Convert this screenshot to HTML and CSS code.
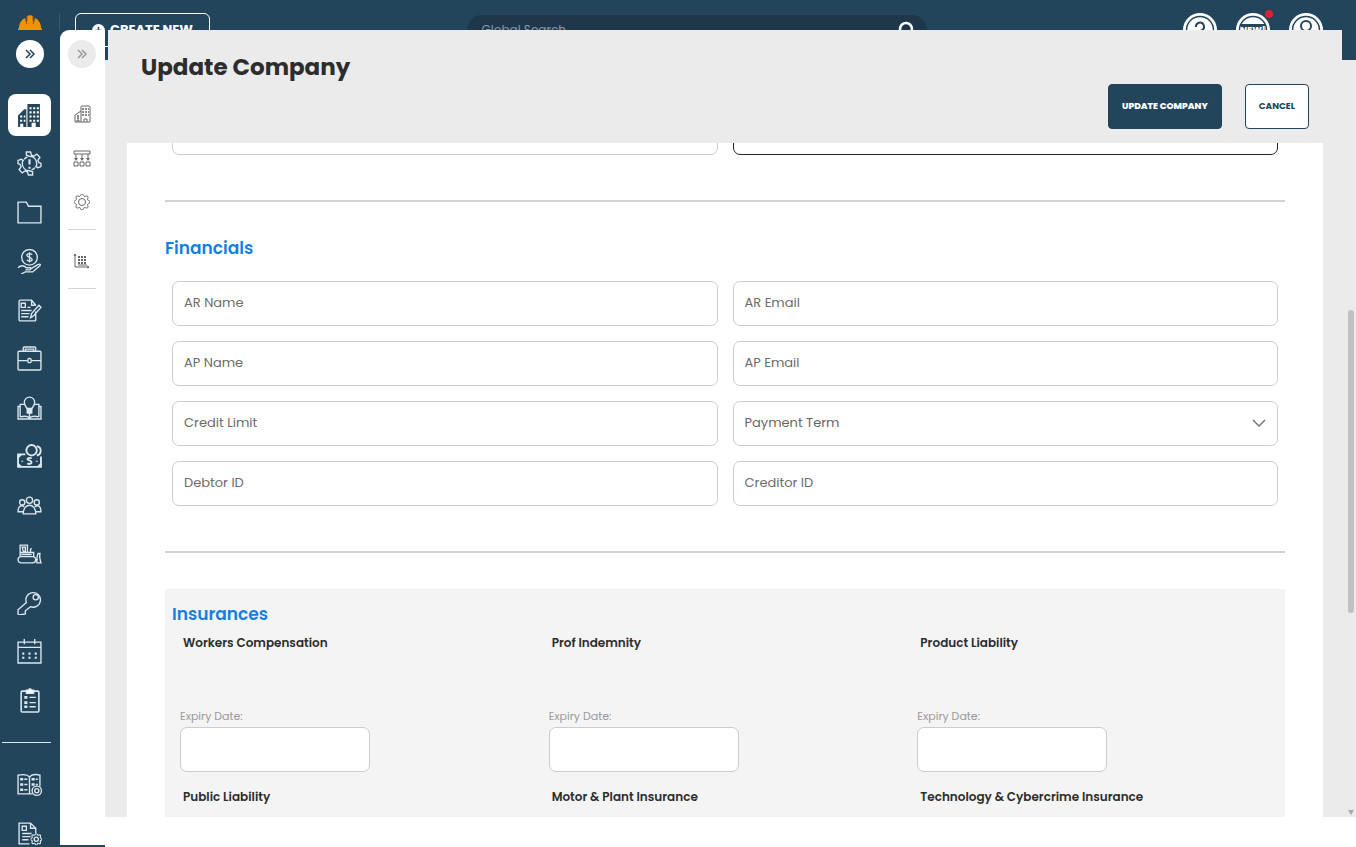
FILE: index.html
```html
<!DOCTYPE html>
<html lang="en">
<head>
    <meta charset="UTF-8">
    <meta name="viewport" content="width=device-width, initial-scale=1.0">
    <title>Update Company</title>
    <link rel="stylesheet" href="styles.css">
</head>
<body>
    <svg class="defs" aria-hidden="true">
        <symbol id="gear" viewBox="0 0 16 16">
            <path d="M9.405 1.05c-.413-1.4-2.397-1.4-2.81 0l-.1.34a1.464 1.464 0 0 1-2.105.872l-.31-.17c-1.283-.698-2.686.705-1.987 1.987l.169.311c.446.82.023 1.841-.872 2.105l-.34.1c-1.4.413-1.4 2.397 0 2.81l.34.1a1.464 1.464 0 0 1 .872 2.105l-.17.31c-.698 1.283.705 2.686 1.987 1.987l.311-.169a1.464 1.464 0 0 1 2.105.872l.1.34c.413 1.4 2.397 1.4 2.81 0l.1-.34a1.464 1.464 0 0 1 2.105-.872l.31.17c1.283.698 2.686-.705 1.987-1.987l-.169-.311a1.464 1.464 0 0 1 .872-2.105l.34-.1c1.4-.413 1.4-2.397 0-2.81l-.34-.1a1.464 1.464 0 0 1-.872-2.105l.17-.31c.698-1.283-.705-2.686-1.987-1.987l-.311.169a1.464 1.464 0 0 1-2.105-.872l-.1-.34z"/>
        </symbol>
    </svg>

    <header class="topbar">
        <a href="#" class="logo" aria-label="Home">
            <svg width="24" height="16" viewBox="0 0 24 16">
                <path fill="#f39200" d="M0 15v-1l1-1c0-4 2-8 6-10l2 6V1c2-1 4-1 6 0v8l2-6c4 2 6 6 6 10l1 1v1z"/>
                <path stroke="#8a5a1c" fill="none" d="M7 3l2 6M17 3l-2 6M9 1v5M15 1v5"/>
            </svg>
        </a>
        <button class="create-new">
            <svg width="13" height="13" viewBox="0 0 13 13">
                <circle cx="6.5" cy="6.5" r="6.5" fill="#fff"/>
                <path d="M6.500 3v7M3 6.500h7" stroke="#23455b" stroke-width="1.500"/>
            </svg>
            CREATE NEW
        </button>
        <form class="search">
            <input type="search" placeholder="Global Search" aria-label="Global Search">
            <button type="button" aria-label="Search">
                <svg width="18" height="18" viewBox="0 0 18 18" fill="none" stroke="#fff" stroke-width="2.500">
                    <circle cx="9" cy="8" r="6"/><path d="M13 12l4 5"/>
                </svg>
            </button>
        </form>
        <nav class="top-actions">
            <button aria-label="Help">
                <svg width="34" height="34" viewBox="0 0 34 34" fill="none" stroke="#23455b" stroke-width="2">
                    <circle cx="17" cy="17" r="17" fill="#fff" stroke="none"/><circle cx="17" cy="17" r="13.500" stroke-width="1.500"/>
                    <path d="M13 14a4 4 0 1 1 6 3c-2 1-2 2-2 4M17 23v2"/>
                </svg>
            </button>
            <button aria-label="What's new">
                <svg width="34" height="34" viewBox="0 0 34 34">
                    <circle cx="17" cy="17" r="17" fill="#fff"/><circle cx="17" cy="17" r="13.500" fill="none" stroke="#23455b" stroke-width="1.500"/>
                    <rect x="5" y="11" width="24" height="12" fill="#23455b"/>
                    <text x="17" y="20" class="new-text">NEW!</text>
                </svg>
                <span class="dot"></span>
            </button>
            <button aria-label="Account">
                <svg width="34" height="34" viewBox="0 0 34 34" fill="none" stroke="#23455b" stroke-width="2">
                    <circle cx="17" cy="17" r="17" fill="#fff" stroke="none"/><circle cx="17" cy="17" r="13.500" stroke-width="1.500"/>
                    <circle cx="17" cy="13" r="5"/><path d="M8 27c1-9 17-9 18 0"/>
                </svg>
            </button>
        </nav>
    </header>

    <div class="workspace">
        <div class="rails">
            <nav class="sidebar" aria-label="Main">
                <button class="toggle" aria-label="Expand menu">
                    <svg width="12" height="10" viewBox="0 0 12 10"><path d="M2 1l4 4-4 4M6 1l4 4-4 4"/></svg>
                </button>
                <div class="nav-list">
                    <a href="#" class="nav-item active" aria-label="Company">
                        <svg viewBox="0 0 24 24">
                            <path fill="#23455b" stroke="none" d="M10 1h12v22H10zM1 23V12l6-6h2v17z"/>
                            <path stroke="#fff" stroke-width="2" stroke-dasharray="2 1.500" d="M12 5h9M12 9h9M12 13h9M12 17h9M3 13h5M3 17h5"/>
                            <path fill="#fff" stroke="none" d="M14 19h4v4h-4zM3 20h3v3H3z"/>
                        </svg>
                    </a>
                    <a href="#" class="nav-item" aria-label="Incidents">
                        <svg viewBox="0 0 24 24">
                            <path d="M9 4V1h4l1 3 2 1 3-2 3 3-2 3 1 2 2 1v3l-3 1-2-1 1-2c0-5-3-8-7-8zM15 20v3h-4l-1-3-2-1-3 2-3-3 2-3-1-2-2-1V9l3-1 2 1-1 2c0 5 3 8 7 8z"/>
                            <path d="M7 8c1-2 2-2 3-2M17 16c-1 2-2 2-3 2"/>
                            <path stroke-width="2" d="M12 8v5M12 15v2"/>
                        </svg>
                    </a>
                    <a href="#" class="nav-item" aria-label="Files">
                        <svg viewBox="0 0 24 24"><path d="M1 22V2h8l2 4h12v16z"/></svg>
                    </a>
                    <a href="#" class="nav-item" aria-label="Finance">
                        <svg viewBox="0 0 24 24">
                            <circle cx="12" cy="8" r="7.500"/><path d="M14.500 5.500c-1-1.500-5-1.500-5 .5s5 2 5 4-4 2-5 .5M12 3v10M1 18c3-3 6-2 8 0h4c1 1 0 2-1 2H8M13 19l7-4c2-1 3 0 2 1l-7 6H8l-4 2"/>
                        </svg>
                    </a>
                    <a href="#" class="nav-item" aria-label="Forms">
                        <svg viewBox="0 0 24 24">
                            <path d="M18 13v8q0 1-1 1H3q-1 0-1-1V3q0-1 1-1h11l4 5M14 2v5h4M4 5h4v4H4zM10 9h3M4 12h10M4 15h8M4 18h7M13 19l1-4 7-8 2 2-7 8z"/>
                        </svg>
                    </a>
                    <a href="#" class="nav-item" aria-label="Projects">
                        <svg viewBox="0 0 24 24">
                            <rect x="1" y="5" width="22" height="18" rx="1"/><path d="M6 5V2q0-1 1-1h10q1 0 1 1v3M8 5V3h8v2M1 14h9M14 14h9"/><rect x="10.500" y="12" width="3" height="4" rx="1"/>
                        </svg>
                    </a>
                    <a href="#" class="nav-item" aria-label="Knowledge">
                        <svg viewBox="0 0 24 24">
                            <path d="M10 14c0-2-3-3-3-7a5 5 0 0 1 10 0c0 4-3 5-3 7zM10 14v3h4v-3M12 17v6M7 9H3v12M17 9h4v12M3 11H1v12h22V11h-2M3 21c4-1 7-1 9 1 2-2 5-2 9-1"/>
                            <path fill="#dce8ef" d="M10 13h4v4h-4z"/>
                        </svg>
                    </a>
                    <a href="#" class="nav-item bold" aria-label="Payments">
                        <svg viewBox="0 0 24 24">
                            <path d="M8 10H1v12h22V12M19 2c5 1 5 8 0 9"/><circle cx="14" cy="6" r="5"/>
                            <path d="M14 14c-1-1-4-1-4 .5s4 1 4 3-3 2-4 1M5 16v1M19 16v1"/><path d="M1 13l3-3M1 19l3 3M23 19l-3 3"/>
                        </svg>
                    </a>
                    <a href="#" class="nav-item" aria-label="Teams">
                        <svg viewBox="0 0 24 24">
                            <circle cx="12" cy="7" r="3"/><circle cx="5" cy="9" r="2.500"/><circle cx="19" cy="9" r="2.500"/>
                            <path d="M6 20c0-11 12-11 12 0zM6 18H1c0-5 2-7 6-5M18 18h5c0-5-2-7-6-5"/>
                        </svg>
                    </a>
                    <a href="#" class="nav-item" aria-label="Plant">
                        <svg viewBox="0 0 24 24">
                            <rect x="1" y="15" width="17" height="6" rx="3"/><path d="M3 15V4h7v7h6v4M3 11h7M5 6h3v4H6zM13 11V8l1-1M18 18h2M20 12h2c-1 4 0 6 1 9h-4c0-3 0-6 1-9M4 13h10"/>
                        </svg>
                    </a>
                    <a href="#" class="nav-item" aria-label="Access">
                        <svg viewBox="0 0 24 24">
                            <path d="M9 12a7 7 0 1 1 4 4l-5 4v3l-6 1-1-1v-4z"/><circle cx="18" cy="7" r="2.500"/>
                        </svg>
                    </a>
                    <a href="#" class="nav-item" aria-label="Calendar">
                        <svg viewBox="0 0 24 24">
                            <path d="M1 3h22v20H1zM1 8h22M7 0v5M17 0v5"/><path stroke-width="2" stroke-dasharray="2 4" d="M5 14h15M5 18h15"/>
                        </svg>
                    </a>
                    <a href="#" class="nav-item" aria-label="Checklist">
                        <svg viewBox="0 0 24 24">
                            <rect x="4" y="3" width="17" height="20" rx="1" stroke-width="1.500"/><path fill="#fff" d="M9 2h2l1-1h1l1 1h2v3H9z"/>
                            <path stroke-width="2.500" d="M7 9h3M7 14h3M7 18h3"/><path d="M12 9h6M12 14h6M12 18h6"/>
                        </svg>
                    </a>
                </div>
                <div class="nav-footer">
                    <a href="#" class="nav-item" aria-label="Catalogue settings">
                        <svg viewBox="0 0 24 24">
                            <path d="M15 21H1V3c5-1 9-1 11 2 2-3 6-3 10-2v11M12 5v16"/><path stroke-width="2.500" d="M3 7h3M3 12h3M3 17h3M14 7h3M14 12h3"/><path d="M7 7h3M7 12h3M7 17h3M18 7h2M18 12h2"/>
                            <circle cx="19" cy="18" r="4.500" fill="#23455b"/><circle cx="19" cy="18" r="2"/>
                        </svg>
                    </a>
                    <a href="#" class="nav-item" aria-label="Form settings">
                        <svg viewBox="0 0 24 24">
                            <path d="M12 22H2V2h11l5 5v5M13 2v5h5M5 5h4v4H5zM5 12h9M5 15h8M5 18h6"/>
                            <use href="#gear" x="13" y="12" width="11" height="11" fill="#23455b" stroke-width="1.500"/><circle cx="18.500" cy="17.500" r="2"/>
                        </svg>
                    </a>
                </div>
            </nav>

            <nav class="subnav" aria-label="Company">
                <button class="toggle muted" aria-label="Expand submenu">
                    <svg width="12" height="10" viewBox="0 0 12 10"><path d="M2 1l4 4-4 4M6 1l4 4-4 4"/></svg>
                </button>
                <div class="subnav-group">
                    <a href="#" class="sub-item" aria-label="Companies">
                        <svg viewBox="0 0 18 18"><path d="M8 17V2q0-1 1-1h7q1 0 1 1v15zM8 6L2 10v7h6M11 17v-3h3v3M4 17v-2h2v2"/><path stroke-width="1.500" stroke-dasharray="2 1" d="M9 4h7M9 7h7M9 10h7M4 11h3M4 13h3"/></svg>
                    </a>
                    <a href="#" class="sub-item" aria-label="Structure">
                        <svg viewBox="0 0 18 18"><path d="M1 2h16v3H1zM3 5v5M9 5v5M15 5v5M1 13h4v4H1zM7 13h4v4H7zM13 13h4v4h-4z"/><path fill="#666" stroke="none" d="M1 9h4l-2 3zM7 9h4l-2 3zM13 9h4l-2 3z"/></svg>
                    </a>
                    <a href="#" class="sub-item" aria-label="Settings">
                        <svg viewBox="0 0 18 18"><use href="#gear" x="1" y="1" width="16" height="16"/><circle cx="9" cy="9" r="3.500"/></svg>
                    </a>
                </div>
                <div class="subnav-group">
                    <a href="#" class="sub-item" aria-label="Reports">
                        <svg viewBox="0 0 18 18"><path d="M2 2v13h14M1 4l1-2 1 2M14 14l2 1-2 1"/><path stroke-width="2" stroke-dasharray="2 1" d="M5 5h9M5 8h9M5 11h9"/><path d="M5 13h9"/></svg>
                    </a>
                </div>
            </nav>
        </div>

        <main class="modal">
            <div class="modal-header">
                <h1>Update Company</h1>
                <div class="modal-actions">
                    <button type="submit" form="company-form" class="btn btn-primary">UPDATE COMPANY</button>
                    <button type="button" class="btn">CANCEL</button>
                </div>
            </div>
            <form id="company-form" class="panel">
                <div class="fields scrolled">
                    <input type="text" class="field" aria-label="Address">
                    <input type="text" class="field focused" aria-label="Postcode">
                </div>
                <hr>
                <section class="financials">
                    <h2>Financials</h2>
                    <div class="fields">
                        <input type="text" class="field" placeholder="AR Name" aria-label="AR Name">
                        <input type="text" class="field" placeholder="AR Email" aria-label="AR Email">
                        <input type="text" class="field" placeholder="AP Name" aria-label="AP Name">
                        <input type="text" class="field" placeholder="AP Email" aria-label="AP Email">
                        <input type="text" class="field" placeholder="Credit Limit" aria-label="Credit Limit">
                        <div class="select-wrap">
                            <select class="field" aria-label="Payment Term">
                                <option>Payment Term</option>
                            </select>
                            <svg width="14" height="8" viewBox="0 0 14 8"><path d="M1 1l6 6 6-6"/></svg>
                        </div>
                        <input type="text" class="field" placeholder="Debtor ID" aria-label="Debtor ID">
                        <input type="text" class="field" placeholder="Creditor ID" aria-label="Creditor ID">
                    </div>
                </section>
                <hr>
                <section class="insurances">
                    <h2>Insurances</h2>
                    <div class="insurance-grid">
                        <div class="insurance">
                            <h3>Workers Compensation</h3>
                            <label for="exp-workers">Expiry Date:</label>
                            <input type="text" class="field" id="exp-workers">
                        </div>
                        <div class="insurance">
                            <h3>Prof Indemnity</h3>
                            <label for="exp-indemnity">Expiry Date:</label>
                            <input type="text" class="field" id="exp-indemnity">
                        </div>
                        <div class="insurance">
                            <h3>Product Liability</h3>
                            <label for="exp-product">Expiry Date:</label>
                            <input type="text" class="field" id="exp-product">
                        </div>
                        <div class="insurance">
                            <h3>Public Liability</h3>
                        </div>
                        <div class="insurance">
                            <h3>Motor &amp; Plant Insurance</h3>
                        </div>
                        <div class="insurance">
                            <h3>Technology &amp; Cybercrime Insurance</h3>
                        </div>
                    </div>
                </section>
            </form>
            <div class="scrollbar">
                <span class="thumb"></span>
                <span class="arrow"></span>
            </div>
        </main>
    </div>
</body>
</html>
```

FILE: styles.css
```css
* {
    box-sizing: border-box;
}
body {
    margin: 0;
    height: 100vh;
    overflow: hidden;
    background: #fff;
    color: #2d2d2d;
    font-family: Poppins, Inter, "Open Sans", sans-serif;
    font-size: 13px;
}
button, input, select {
    font-family: inherit;
}
button {
    cursor: pointer;
}
h1, h2, h3 {
    margin: 0;
}
svg {
    display: block;
}
.defs {
    position: absolute;
    width: 0;
    height: 0;
}

/* top bar */
.topbar {
    display: flex;
    align-items: flex-start;
    height: 60px;
    padding: 13px 33px 0 0;
    background: #23455b;
}
.logo {
    display: flex;
    justify-content: center;
    width: 60px;
    height: 34px;
    padding-top: 2px;
    border-right: 1px solid #3d5b6e;
}
.create-new {
    display: flex;
    align-items: center;
    justify-content: center;
    gap: 5px;
    width: 135px;
    height: 34px;
    margin-left: 15px;
    padding: 0;
    border: 1px solid #fff;
    border-radius: 6px;
    background: none;
    color: #fff;
    font-size: 13px;
    font-weight: 700;
}
.search {
    display: flex;
    align-items: center;
    width: 460px;
    height: 30px;
    margin: 2px auto 0;
    padding: 0 12px 0 15px;
    border-radius: 15px;
    background: #1e374a;
}
.search input {
    flex: 1;
    padding: 0;
    border: 0;
    outline: 0;
    background: none;
    color: #fff;
    font-size: 12px;
}
.search input::placeholder {
    color: #8d9aa5;
}
.search button {
    padding: 0;
    border: 0;
    background: none;
}
.top-actions {
    display: flex;
    gap: 19px;
}
.top-actions button {
    position: relative;
    padding: 0;
    border: 0;
    background: none;
}
.new-text {
    fill: #fff;
    font-size: 9px;
    font-weight: 800;
    text-anchor: middle;
}
.dot {
    position: absolute;
    top: -3px;
    right: -3px;
    width: 8px;
    height: 8px;
    border-radius: 50%;
    background: #d9232e;
}

/* the workspace overlaps the lower half of the top bar */
.workspace {
    position: relative;
    display: flex;
    height: calc(100vh - 30px);
    margin-top: -30px;
}
.rails {
    display: flex;
    background: #23455b;
}
.sidebar, .subnav {
    display: flex;
    flex-direction: column;
    align-items: center;
    padding-top: 10px;
}
.sidebar {
    width: 60px;
    padding-right: 1px;
    overflow: hidden;
}
.toggle {
    display: flex;
    flex: none;
    align-items: center;
    justify-content: center;
    width: 28px;
    height: 28px;
    padding: 0;
    border: 0;
    border-radius: 50%;
    background: #fff;
}
.toggle svg {
    fill: none;
    stroke: #23455b;
    stroke-width: 1.5;
}
.toggle.muted {
    background: #ebebeb;
}
.toggle.muted svg {
    stroke: #999;
}
.nav-list {
    display: flex;
    flex: 1;
    flex-direction: column;
    justify-content: space-between;
    margin: 26px 0 21px;
}
.nav-item {
    display: flex;
    flex: none;
    align-items: center;
    justify-content: center;
    width: 43px;
    height: 42px;
    border-radius: 8px;
}
.nav-item.active {
    background: #fff;
}
.nav-item svg {
    width: 25px;
    height: 25px;
    fill: none;
    stroke: #dce8ef;
    stroke-width: 1.3;
}
.nav-item.bold svg {
    stroke-width: 1.8;
}
.nav-footer {
    display: flex;
    flex: none;
    flex-direction: column;
    align-items: center;
    gap: 7px;
    width: 49px;
    height: 105px;
    margin-right: 7px;
    padding: 20px 0 0 7px;
    border-top: 1px solid #dce8ef;
}
.subnav {
    width: 45px;
    margin-bottom: 2px;
    padding-right: 1px;
    border-top-left-radius: 9px;
    background: #fff;
}
.subnav .toggle {
    margin-bottom: 28px;
}
.subnav-group {
    display: flex;
    flex-direction: column;
    align-items: center;
    gap: 8px;
    width: 28px;
    margin-bottom: 13px;
    padding-bottom: 9px;
    border-bottom: 1px solid #d5d5d5;
}
.sub-item {
    display: flex;
    align-items: center;
    justify-content: center;
    width: 28px;
    height: 36px;
}
.sub-item svg {
    width: 18px;
    height: 18px;
    fill: none;
    stroke: #666;
    stroke-width: 1;
}

/* modal */
.modal {
    position: relative;
    display: flex;
    flex: 1;
    flex-direction: column;
    min-width: 0;
    margin-bottom: 30px;
    background: linear-gradient(#ebebeb, #ebebeb) 0 30px no-repeat;
}
.modal-header {
    flex: none;
    height: 113px;
    margin: 0 14px 0 3px;
    padding: 21px 33px 0;
    background: #ebebeb;
}
.modal-header h1 {
    font-size: 23px;
    font-weight: 700;
    line-height: 32px;
}
.modal-actions {
    display: flex;
    justify-content: flex-end;
    gap: 23px;
}
.btn {
    height: 45px;
    margin-top: 1px;
    padding: 0 13px;
    border: 1px solid #23455b;
    border-radius: 4px;
    background: #fff;
    color: #23455b;
    font-size: 9px;
    font-weight: 700;
}
.btn-primary {
    background: #23455b;
    color: #fff;
    font-weight: 800;
}
.panel {
    flex: 1;
    min-height: 0;
    margin: 0 33px 0 22px;
    padding: 0 38px;
    overflow: hidden;
    background: #fff;
}
.fields {
    display: grid;
    grid-template-columns: 1fr 1fr;
    gap: 15px;
    padding: 0 7px;
}
/* first row sits mostly above the scrolled edge */
.fields.scrolled {
    margin-top: -33px;
}
.field {
    width: 100%;
    height: 45px;
    padding: 0 11px 2px;
    border: 1px solid #ccc;
    border-radius: 7px;
    outline: 0;
    background: #fff;
    color: #666;
    font-size: 13px;
}
.field::placeholder {
    color: #6b6b6b;
}
.field.focused {
    border-color: #222;
}
.select-wrap {
    position: relative;
}
.select-wrap select {
    appearance: none;
}
.select-wrap svg {
    position: absolute;
    top: 18px;
    right: 12px;
    fill: none;
    stroke: #777;
    stroke-width: 1.5;
    pointer-events: none;
}
hr {
    height: 2px;
    margin: 45px 0 0;
    border: 0;
    background: #d2d2d2;
}
h2 {
    color: #137fe0;
    font-size: 17px;
    font-weight: 600;
    line-height: 24px;
}
.financials h2 {
    padding: 34px 0 21px;
}
.insurances {
    margin-top: 36px;
    padding: 13px 7px;
    background: #f4f4f4;
}
.insurance-grid {
    display: grid;
    grid-template-columns: 1fr 1fr 1fr;
    row-gap: 8px;
}
.insurance {
    padding: 7px 8px 0;
}
.insurance h3 {
    padding-left: 3px;
    font-size: 12px;
    font-weight: 600;
    line-height: 20px;
}
.insurance label {
    display: block;
    margin-top: 53px;
    color: #999;
    font-size: 11px;
    line-height: 20px;
}
.insurance .field {
    display: block;
    width: 190px;
    margin-top: 1px;
}

.scrollbar {
    position: absolute;
    top: 30px;
    right: 2px;
    bottom: 0;
    width: 6px;
}
.thumb {
    position: absolute;
    top: 33%;
    width: 6px;
    height: 40%;
    border-radius: 3px;
    background: #c1c1c1;
}
.arrow {
    position: absolute;
    bottom: 2px;
    border: 3px solid transparent;
    border-top: 5px solid #aaa;
    border-bottom: 0;
}
```
